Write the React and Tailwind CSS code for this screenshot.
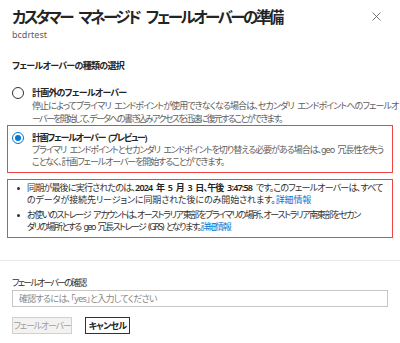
import React from 'react';

const font = '[font-family:"Noto_Sans","Noto_Sans_CJK_JP",sans-serif] [font-feature-settings:"palt"]';

const Radio = ({ checked }) => (
  <span
    className={`flex h-[12px] w-[12px] shrink-0 items-center justify-center rounded-full border ${
      checked ? 'border-[#0078d4]' : 'border-[#323130]'
    }`}
  >
    {checked && <span className="h-[6px] w-[6px] rounded-full bg-[#0078d4]" />}
  </span>
);

// one fixed line of text; tracking tuned per line to match the reference widths
const Line = ({ className = '', children }) => (
  <span className={`block whitespace-nowrap [word-spacing:2px] ${className}`}>{children}</span>
);

const Bullet = () => (
  <span className="w-[19px] shrink-0 pl-[9px] pt-[5px]">
    <span className="block h-[3px] w-[3px] rounded-full bg-[#323130]" />
  </span>
);

export default function App() {
  return (
    <div className={`relative h-[343px] w-[400px] overflow-hidden bg-white text-[#323130] ${font}`}>
      {/* Header */}
      <div className="flex items-start justify-between pl-3 pr-[19px] pt-[5px]">
        <div>
          <h1 className="whitespace-nowrap text-[15.5px] font-semibold leading-[24px] tracking-[-2.5px] text-[#242424] [word-spacing:5px]">
            カスタマー マネージド フェールオーバーの準備
          </h1>
          <p className="text-[9px] leading-[12px] text-[#605e5c]">bcdrtest</p>
        </div>
        <svg className="mt-[7px]" width="9" height="9" viewBox="0 0 9 9">
          <path d="M0.5 0.5L8.5 8.5M8.5 0.5L0.5 8.5" stroke="#6b6967" strokeWidth="0.9" />
        </svg>
      </div>

      {/* Failover type */}
      <div className="mt-[19px] px-3 text-[9px] font-semibold leading-[12px] tracking-[-0.7px] text-[#242424]">
        フェールオーバーの種類の選択
      </div>

      <div className="mt-[15px] px-3">
        <div className="flex gap-[8px]">
          <Radio />
          <div className="text-[9px]">
            <div className="font-semibold leading-[12px] tracking-[-0.8px] text-[#242424]">計画外のフェールオーバー</div>
            <div className="leading-[13px] text-[#605e5c]">
              <Line className="tracking-[-0.9px]">
                停止によってプライマリ エンドポイントが使用できなくなる場合は、セカンダリ エンドポイントへのフェールオ
              </Line>
              <Line className="tracking-[-1.65px]">
                ーバーを開始して、データへの書き込みアクセスを迅速に復元することができます。
              </Line>
            </div>
          </div>
        </div>
      </div>

      <div className="mx-[7px] flex gap-[8px] border border-[#ee4444] pb-[4px] pl-[4px] pt-[6px]">
        <Radio checked />
        <div className="text-[9px]">
          <div className="font-semibold leading-[12px] tracking-[-1.3px] text-[#242424] [word-spacing:2px]">
            計画フェールオーバー (プレビュー)
          </div>
          <div className="leading-[12px] text-[#605e5c]">
            <Line className="tracking-[-1.02px]">
              プライマリ エンドポイントとセカンダリ エンドポイントを切り替える必要がある場合は、geo 冗長性を失う
            </Line>
            <Line className="tracking-[-1.1px]">ことなく、計画フェールオーバーを開始することができます。</Line>
          </div>
        </div>
      </div>

      {/* Info */}
      <div className="mx-[7px] mt-[6px] border border-[#ee4444] pb-[4px] pt-[2px] text-[9px] leading-[12px] text-[#323130]">
        <ul className="flex flex-col gap-[3px]">
          <li className="flex">
            <Bullet />
            <div>
              <Line className="tracking-[-0.8px] [word-spacing:1.5px]">
                同期が最後に実行されたのは、<b className="font-semibold text-[#242424]">2024 年 5 月 3 日、午後 3:47:58</b> です。このフェールオーバーは、すべて
              </Line>
              <Line className="tracking-[-0.1px]">
                のデータが接続先リージョンに同期された後にのみ開始されます。<a className="text-[#0078d4]">詳細情報</a>
              </Line>
            </div>
          </li>
          <li className="flex">
            <Bullet />
            <div>
              <Line className="tracking-[-1.35px]">
                お使いのストレージ アカウントは、オーストラリア東部をプライマリの場所、オーストラリア南東部をセカン
              </Line>
              <Line className="tracking-[-1.55px]">
                ダリの場所とする geo 冗長ストレージ (GRS) となります。<a className="text-[#0078d4]">詳細情報</a>
              </Line>
            </div>
          </li>
        </ul>
      </div>

      {/* Footer */}
      <div className="mt-[22px] border-t border-[#e8e8e8] px-3">
        <div className="mt-[16px] text-[9px] leading-[12px] tracking-[-1.8px] text-[#323130]">フェールオーバーの確認</div>
        <div className="mt-[1px] flex h-[17px] w-[376px] items-center border border-[#c8c6c4] px-[6px] text-[9px] tracking-[-0.7px] text-[#8a8886]">
          確認するには、「yes」と入力してください
        </div>
        <div className="mt-[10px] flex gap-[13px]">
          <button className="flex h-[17px] w-[60px] items-center justify-center whitespace-nowrap border border-[#d2d0ce] bg-[#f3f2f1] text-[9px] tracking-[-1.2px] text-[#a19f9d]">
            フェールオーバー
          </button>
          <button className="flex h-[17px] w-[45px] items-center justify-center whitespace-nowrap border border-[#323130] bg-white text-[9px] font-semibold tracking-[-0.8px] text-[#242424]">
            キャンセル
          </button>
        </div>
      </div>
    </div>
  );
}
